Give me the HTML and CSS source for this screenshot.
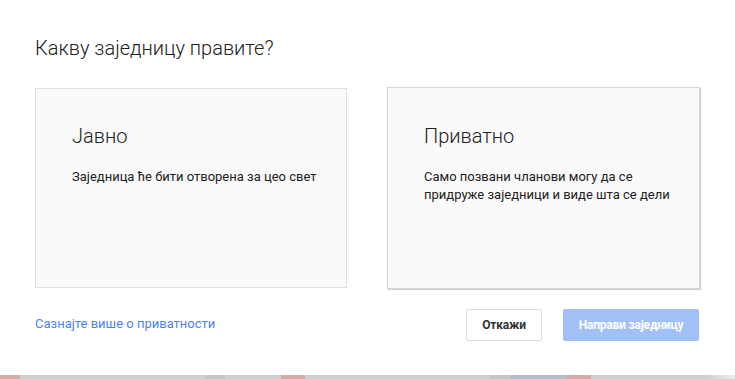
FILE: index.html
```html
<!DOCTYPE html>
<html lang="sr">
<head>
    <meta charset="UTF-8">
    <meta name="viewport" content="width=device-width, initial-scale=1.0">
    <title>Нова заједница</title>
    <link rel="stylesheet" href="styles.css">
</head>
<body>
    <div class="dialog">
        <h1 class="dialog-title">Какву заједницу правите?</h1>

        <div class="options">
            <div class="option">
                <h2>Јавно</h2>
                <p>Заједница ће бити отворена за цео свет</p>
            </div>
            <div class="option option-hover">
                <h2>Приватно</h2>
                <p>Само позвани чланови могу да се придруже заједници и виде шта се дели</p>
            </div>
        </div>

        <div class="dialog-footer">
            <a href="#" class="learn-more">Сазнајте више о приватности</a>
            <div class="buttons">
                <button class="btn btn-cancel">Откажи</button>
                <button class="btn btn-create" disabled>Направи заједницу</button>
            </div>
        </div>
    </div>

    <div class="page-behind">
        <span class="patch pink" style="width: 20px"></span>
        <span class="patch grey" style="width: 185px"></span>
        <span class="patch dark" style="width: 20px"></span>
        <span class="patch grey" style="width: 56px"></span>
        <span class="patch pink" style="width: 24px"></span>
        <span class="patch grey" style="width: 185px"></span>
        <span class="patch dark" style="width: 20px"></span>
        <span class="patch blue" style="width: 57px"></span>
        <span class="patch pink" style="width: 24px"></span>
        <span class="patch fade"></span>
    </div>
</body>
</html>
```

FILE: styles.css
```css
body {
    margin: 0;
    background: #fff;
    font-family: Roboto, "Liberation Sans", Arial, sans-serif;
    color: #212121;
}

.dialog {
    height: 375px;
    box-sizing: border-box;
    padding: 36px 36px 0 35px;
}

.dialog-title {
    margin: 0;
    font-size: 20px;
    font-weight: 300;
    line-height: 24px;
}

.options {
    display: grid;
    grid-template-columns: 312px 313px;
    gap: 40px;
    margin-top: 28px;
}

.option {
    height: 200px;
    box-sizing: border-box;
    padding: 35px 28px 0 36px;
    background: #fafafa;
    border: 1px solid #e0e0e0;
}

.option-hover {
    margin-top: -1px;
    height: 202px;
    border-color: #d6d6d6;
    box-shadow: 1px 1px 1px rgba(0,0,0,0.18);
    padding-top: 36px;
}

.option h2 {
    margin: 0;
    font-size: 20px;
    font-weight: 300;
    line-height: 24px;
}

.option p {
    margin: 20px 0 0;
    font-size: 13px;
    line-height: 18px;
    color: #212121;
}

.dialog-footer {
    display: flex;
    justify-content: space-between;
    align-items: center;
    margin-top: 20px;
}

.learn-more {
    font-size: 13px;
    color: #4d83f0;
    text-decoration: none;
    margin-top: -4px;
}

.buttons {
    display: flex;
    gap: 21px;
}

.btn {
    height: 32px;
    padding: 0;
    border-radius: 2px;
    font-family: Roboto, "Liberation Sans", Arial, sans-serif;
    font-size: 12px;
    font-weight: bold;
    white-space: nowrap;
    letter-spacing: -0.2px;
    cursor: pointer;
}

.btn-cancel {
    width: 76px;
    background: #fff;
    border: 1px solid #dcdcdc;
    color: #333;
}

.btn-create {
    width: 136px;
    background: #a1c0f6;
    border: 1px solid #a1c0f6;
    color: #fff;
}

.page-behind {
    display: flex;
    height: 4px;
}

.patch {
    display: block;
    height: 4px;
}

.pink { background: #d6aba6; }
.grey { background: #cfcfcf; }
.dark { background: #c6c6c6; }
.blue { background: #b7bccb; }
.fade {
    flex: 1;
    background: linear-gradient(to right, #cfcfcf 80%, #ececec);
}
```
